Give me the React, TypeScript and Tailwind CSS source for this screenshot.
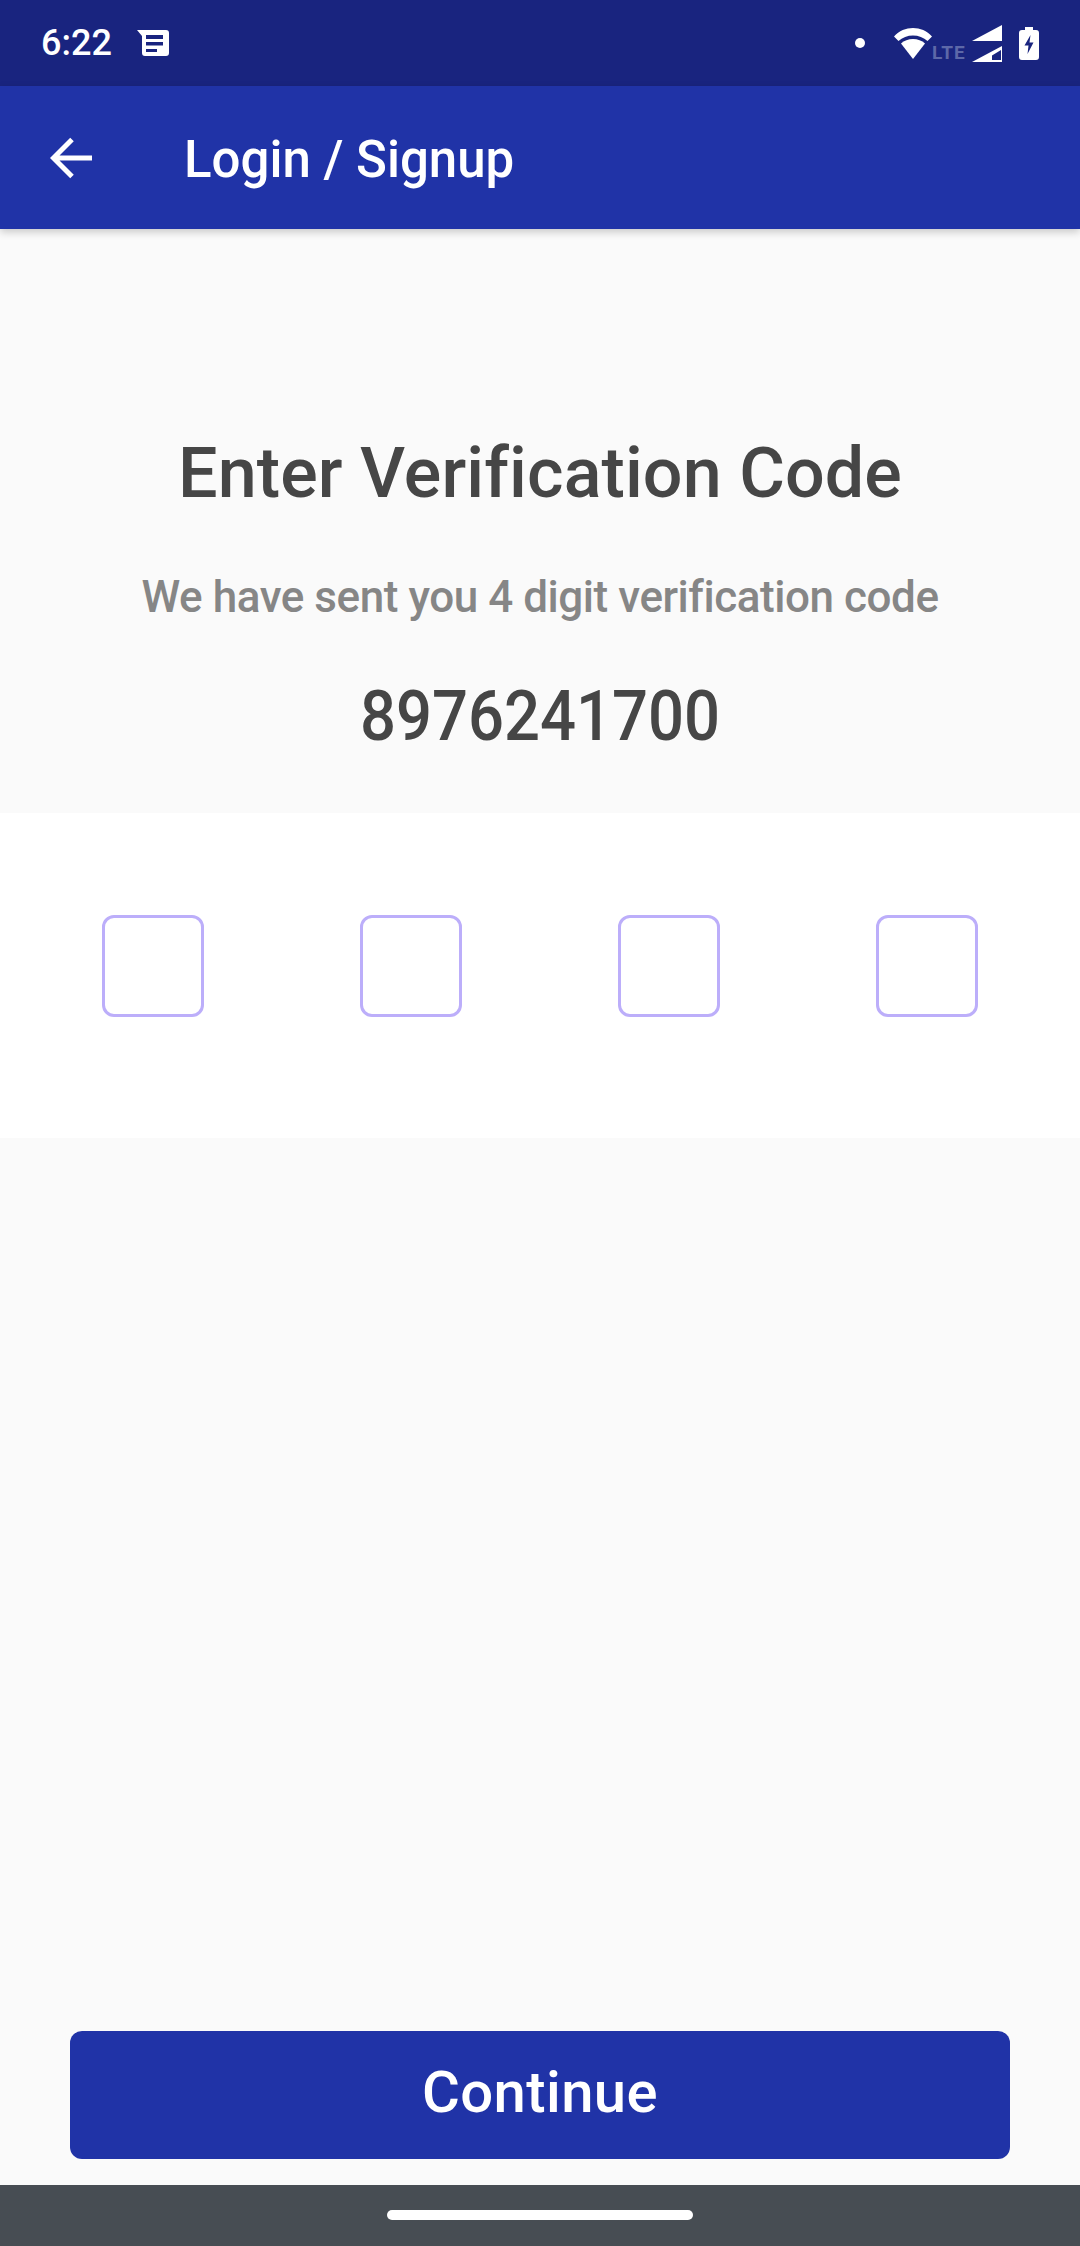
const din = "font-['Roboto',sans-serif] font-medium";

const MessageIcon = () => (
  <svg width="32" height="26" viewBox="0 0 32 26" className="ml-[25px]">
    <path d="M0 0H29a3 3 0 0 1 3 3V23a3 3 0 0 1-3 3H8a3 3 0 0 1-3-3V6Z" fill="#fff" />
    <path d="M9 5H26V9H9ZM9 12H26V15.500H9ZM9 19H20V22H9Z" fill="#19247f" />
  </svg>
);

const StatusIcons = () => (
  <div className="ml-auto mr-[41px] flex items-center">
    <div className="h-[10px] w-[10px] rounded-full bg-white" />
    <svg width="38" height="31" viewBox="0 0 38 31" className="ml-[29px]">
      <path d="M0 8.500C10 -2.800 28 -2.800 38 8.500L33.500 13C26 5.500 12 5.500 4.500 13Z" fill="#fff" />
      <path d="M7 15.500C13 9.500 25 9.500 31 15.500L19 31Z" fill="#fff" />
    </svg>
    <span className="mt-[18px] w-[40px] font-['Roboto',sans-serif] text-[19px] leading-none font-bold tracking-[1px] text-[#5d68a8]">LTE</span>
    <svg width="30" height="37" viewBox="0 0 30 37">
      <path d="M30 0V16H0Z" fill="#fff" />
      <path fillRule="evenodd" d="M30 21V37H0ZM29 25 20 30.500V35H29Z" fill="#fff" />
    </svg>
    <svg width="20" height="33" viewBox="0 0 20 33" className="ml-[17px]">
      <path d="M6 0H14V3H17a3 3 0 0 1 3 3V30a3 3 0 0 1-3 3H3a3 3 0 0 1-3-3V6a3 3 0 0 1 3-3H6Z" fill="#fff" />
      <path d="M11.500 8 5.500 18.500H9.500L8.500 27 14.500 15.500H10.500Z" fill="#19247f" />
    </svg>
  </div>
);

const CodeBox = () => <div className="h-[102px] w-[102px] rounded-[12px] border-[3px] border-[#bcaefa] bg-white" />;

export default function App() {
  return (
    <div className="flex h-[2246px] w-[1080px] flex-col bg-[#fafafa]">
      <div className="flex h-[86px] items-center bg-[#19247f] pl-[41px]">
        <span className="font-['Roboto',sans-serif] text-[36px] leading-none font-medium text-white">6:22</span>
        <MessageIcon />
        <StatusIcons />
      </div>

      <div className="relative flex h-[143px] items-center bg-[#2033a7] shadow-[0_3px_8px_rgba(0,0,0,0.2)]">
        <svg width="42" height="42" viewBox="0 0 42 42" className="ml-[50px]">
          <path d="M42 21H4M22 2.500 3.500 21 22 39.500" fill="none" stroke="#fff" strokeWidth="5" />
        </svg>
        <span className="mt-[3px] ml-[92px] font-['Roboto',sans-serif] text-[51px] leading-none font-medium text-white">Login / Signup</span>
      </div>

      <div className="flex flex-col items-center pt-[209px]">
        <h1 className={`${din} text-[70px] leading-[70px] tracking-[0.1px] text-[#464646]`}>Enter Verification Code</h1>
        <p className={`${din} mt-[67px] text-[44px] leading-[44px] tracking-[-0.45px] text-[#868686]`}>We have sent you 4 digit verification code</p>
        <p className={`${din} mt-[62px] scale-x-[0.905] text-[70px] leading-[70px] text-[#464646]`}>8976241700</p>
      </div>

      <div className="mt-[62px] flex h-[325px] bg-white pt-[102px] pl-[102px]">
        <div className="flex gap-[156px]">
          <CodeBox />
          <CodeBox />
          <CodeBox />
          <CodeBox />
        </div>
      </div>

      <div className="flex-1" />

      <button className={`${din} mx-[70px] mb-[26px] h-[128px] rounded-[12px] bg-[#2033a7] pb-[5px] text-[58px] tracking-[0.4px] text-white`}>Continue</button>

      <div className="flex h-[61px] justify-center bg-[#474d53] pt-[25px]">
        <div className="h-[10px] w-[306px] rounded-full bg-white" />
      </div>
    </div>
  );
}
